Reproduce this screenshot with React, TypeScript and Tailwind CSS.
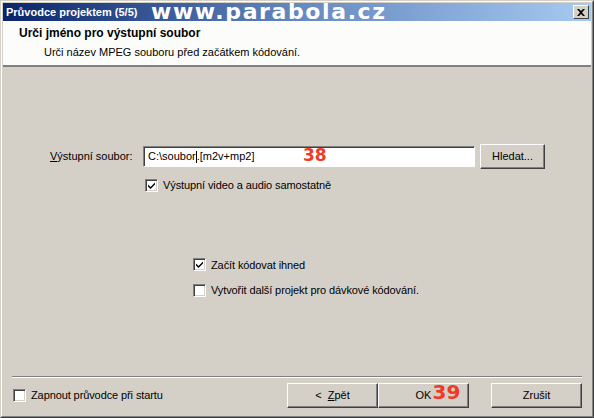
import React from 'react';

function Check({ checked }: { checked?: boolean }) {
  return (
    <span className="w-[13px] h-[13px] bg-white border border-t-[#808080] border-l-[#808080] border-b-white border-r-white shadow-[inset_1px_1px_0_#404040,inset_-1px_-1px_0_#d4d0c8] flex items-center justify-center shrink-0">
      {checked && (
        <svg width="9" height="9" viewBox="0 0 9 9">
          <path d="M1 3.5 L3.5 6 L8 1.5 L8 3.5 L3.5 8 L1 5.5 Z" fill="#000" />
        </svg>
      )}
    </span>
  );
}

function Button({ children, className = '' }: { children: React.ReactNode; className?: string }) {
  return (
    <div
      className={`h-[25px] bg-[#d4d0c8] border border-t-white border-l-white border-b-[#404040] border-r-[#404040] shadow-[inset_-1px_-1px_0_#808080] flex items-center justify-center ${className}`}
    >
      {children}
    </div>
  );
}

export default function App() {
  return (
    <div
      className="w-[594px] h-[418px] bg-[#d4d0c8] border border-t-[#d4d0c8] border-l-[#d4d0c8] border-b-[#404040] border-r-[#404040] text-[11px] text-black flex flex-col overflow-hidden"
      style={{ fontFamily: '"Liberation Sans", Arial, sans-serif' }}
    >
      <div className="flex-1 flex flex-col border border-t-white border-l-white border-b-[#808080] border-r-[#808080] p-px">
        {/* Title bar */}
        <div className="h-[18px] bg-gradient-to-r from-[#0a246a] via-[#6688c0] to-[#a6caf0] flex items-center pl-[3px] pr-[2px] relative">
          <span className="text-white font-bold text-[11px] leading-none">Průvodce projektem (5/5)</span>
          <span
            className="absolute left-[148px] top-[-1px] text-white font-bold text-[22px] leading-[20px] tracking-[1.6px]"
            style={{ fontFamily: '"DejaVu Sans", Verdana, sans-serif' }}
          >
            www.parabola.cz
          </span>
          <div className="ml-auto w-[16px] h-[14px] bg-[#d4d0c8] border border-t-white border-l-white border-b-[#404040] border-r-[#404040] flex items-center justify-center">
            <svg width="8" height="7" viewBox="0 0 8 7">
              <path d="M0 0 L2 0 L4 2 L6 0 L8 0 L5 3.5 L8 7 L6 7 L4 5 L2 7 L0 7 L3 3.5 Z" fill="#000" />
            </svg>
          </div>
        </div>

        {/* Header */}
        <div className="h-[46px] bg-[#fcfdfa] border-b-2 border-b-[#808080] pl-[16px] pt-[5px] shrink-0">
          <div className="font-bold text-[12px] leading-[14px]">Urči jméno pro výstupní soubor</div>
          <div className="pl-[25px] mt-[6px] leading-[13px]">Urči název MPEG souboru před začátkem kódování.</div>
        </div>

        {/* Body */}
        <div className="flex-1 flex flex-col">
          <div className="flex items-center mt-[77px] ml-[47px]">
            <span className="w-[93px]">
              <u>V</u>ýstupní soubor:
            </span>
            <div className="relative w-[332px] h-[21px] bg-white border border-t-[#808080] border-l-[#808080] border-b-white border-r-white shadow-[inset_1px_1px_0_#404040] flex items-center pl-[4px]">
              <span>
                C:\soubor<span className="inline-block w-px h-[12px] bg-black align-middle" />.[m2v+mp2]
              </span>
              <span
                className="absolute left-[159px] top-[0px] text-[#f03a28] font-bold text-[17px] leading-none"
                style={{ fontFamily: '"DejaVu Sans", Verdana, sans-serif' }}
              >
                38
              </span>
            </div>
            <Button className="w-[65px] ml-[5px]">Hledat...</Button>
          </div>
          <div className="flex items-center gap-[5px] ml-[142px] mt-[8px] tracking-[-0.1px]">
            <Check checked />
            <span>Výstupní video a audio samostatně</span>
          </div>

          <div className="flex items-center gap-[5px] ml-[190px] mt-[63px] tracking-[-0.1px]">
            <Check checked />
            <span>Začít kódovat ihned</span>
          </div>
          <div className="flex items-center gap-[5px] ml-[190px] mt-[9px] tracking-[-0.1px]">
            <Check />
            <span>Vytvořit další projekt pro dávkové kódování.</span>
          </div>

          <div className="mt-auto mx-[9px] h-[2px] border-t border-t-[#808080] border-b border-b-white" />

          <div className="flex items-center pl-[10px] pr-[9px] pt-[5px] pb-[7px]">
            <div className="flex items-center gap-[5px] tracking-[-0.1px]">
              <Check />
              <span>Zapnout průvodce při startu</span>
            </div>
            <Button className="w-[91px] ml-auto">
              &lt;&nbsp;&nbsp;<u>Z</u>pět
            </Button>
            <Button className="w-[91px]">
              <span className="relative">
                OK
                <span
                  className="absolute left-[17px] top-[-5px] text-[#f03a28] font-bold text-[20px] leading-none"
                  style={{ fontFamily: '"DejaVu Sans", Verdana, sans-serif' }}
                >
                  39
                </span>
              </span>
            </Button>
            <Button className="w-[91px] ml-[22px]">Zrušit</Button>
          </div>
        </div>
      </div>
    </div>
  );
}
